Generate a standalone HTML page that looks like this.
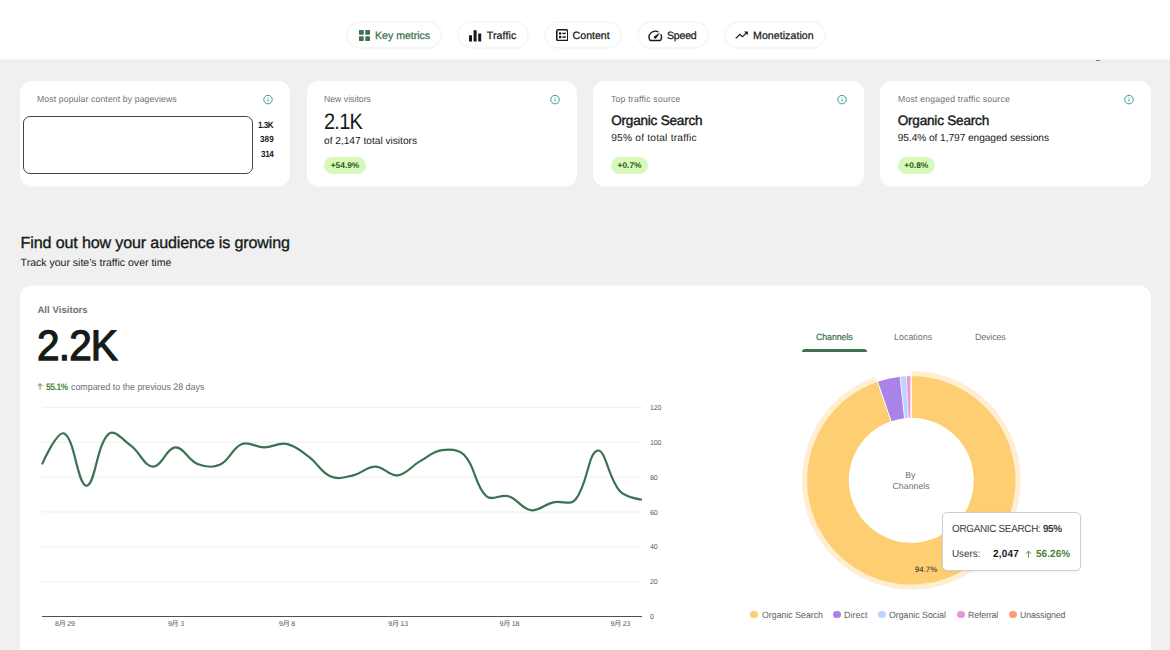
<!DOCTYPE html>
<html lang="en">
<head>
<meta charset="utf-8">
<title>Site Kit dashboard</title>
<style>
*{box-sizing:border-box;margin:0;padding:0}
html,body{width:1170px;height:650px;overflow:hidden}
body{background:#f0f0f1;font-family:"Liberation Sans","Noto Sans CJK SC",sans-serif;color:#161b18;position:relative;-webkit-font-smoothing:antialiased;text-rendering:geometricPrecision}
.abs{position:absolute}
.t{position:absolute;white-space:nowrap;line-height:1}
#hdr{left:0;top:0;width:1170px;height:59px;background:#fff;box-shadow:0 1px 0 #f6f6f7,0 4px 0 #eeeeef}
.chip{position:absolute;top:21px;height:28px;border:2px solid #f6f7f7;border-radius:14px;background:#fff}
.chip .t{font-size:10.6px;top:7.2px;font-weight:400;color:#161b18;-webkit-text-stroke:0.25px currentColor}
.card{position:absolute;background:#fff;border-radius:12px}
.kt{font-size:8.85px;color:#6c726e;top:13.5px;left:17px}
.badge{position:absolute;height:17px;border-radius:9px;background:#d8f9bc;color:#265912;font-size:8.4px;font-weight:700;text-align:center;line-height:17px}
.num{font-size:9px;font-weight:700;color:#161b18;transform:scaleX(0.9);transform-origin:0 0}
.sub{font-size:10.2px;color:#161b18}
.med{font-size:14px;color:#161b18;-webkit-text-stroke:0.4px currentColor}
.tab{font-size:9.1px;color:#6c726e}
.lg{font-size:9.15px;color:#5b615d}
.info{position:absolute;top:13px;width:12px;height:12px}
.ax{font-family:"Liberation Sans","Noto Sans CJK SC",sans-serif;font-size:7.1px;fill:#5a5a5a;letter-spacing:-0.25px}
</style>
</head>
<body>

<!-- header / nav chips -->
<div id="hdr" class="abs"></div>
<div class="chip" style="left:345.5px;width:96.5px">
  <svg class="abs" style="left:11.5px;top:7.2px" width="11" height="11" viewBox="0 0 11 11"><g fill="#3c7251"><rect x="0" y="0" width="4.7" height="4.7" rx="0.6"/><rect x="6.3" y="0" width="4.7" height="4.7" rx="0.6"/><rect x="0" y="6.3" width="4.7" height="4.7" rx="0.6"/><rect x="6.3" y="6.3" width="4.7" height="4.7" rx="0.6"/></g></svg>
  <span class="t" id="n1" style="left:27.6px;color:#3c7251;top:8.00px;letter-spacing:-0.041px">Key metrics</span>
</div>
<div class="chip" style="left:457.0px;width:72.0px">
  <svg class="abs" style="left:10.1px;top:6.7px" width="13" height="12" viewBox="0 0 13 12"><g fill="#161b18"><rect x="0" y="5.3" width="3" height="6.2"/><rect x="4.6" y="0.2" width="3" height="11.3"/><rect x="9.2" y="3.5" width="3" height="8"/></g></svg>
  <span class="t" id="n2" style="left:27.7px;top:8.00px;letter-spacing:0.122px">Traffic</span>
</div>
<div class="chip" style="left:543.5px;width:78.0px">
  <svg class="abs" style="left:10.1px;top:6.1px" width="12.6" height="12.4" viewBox="0 0 12.6 12.4"><rect x="0.8" y="0.8" width="11" height="10.8" rx="1.7" fill="none" stroke="#161b18" stroke-width="1.6"/><g fill="#161b18"><rect x="3" y="3.3" width="2.3" height="2.3"/><rect x="3" y="6.9" width="2.3" height="2.3"/><rect x="6.4" y="3.7" width="3.4" height="1.5"/><rect x="6.4" y="7.3" width="3.4" height="1.5"/></g></svg>
  <span class="t" id="n3" style="left:27.1px;top:8.00px;letter-spacing:-0.002px">Content</span>
</div>
<div class="chip" style="left:637.0px;width:72.0px">
  <svg class="abs" style="left:8.3px;top:4.5px" width="16.56" height="15.84" viewBox="0 0 24 24" preserveAspectRatio="none"><path fill="#161b18" d="M20.38 8.57l-1.23 1.85a8 8 0 0 1-.22 7.58H5.07A8 8 0 0 1 15.58 6.85l1.85-1.23A10 10 0 0 0 3.35 19a2 2 0 0 0 1.72 1h13.85a2 2 0 0 0 1.74-1 10 10 0 0 0-.27-10.44zm-9.79 6.84a2 2 0 0 0 2.83 0l5.66-8.49-8.49 5.66a2 2 0 0 0 0 2.83z"/></svg>
  <span class="t" id="n4" style="left:28px;top:8.00px;letter-spacing:-0.228px">Speed</span>
</div>
<div class="chip" style="left:724.0px;width:102.0px">
  <svg class="abs" style="left:8.4px;top:5.3px" width="15.12" height="14.40" viewBox="0 0 24 24" preserveAspectRatio="none"><path fill="#161b18" d="M16 6l2.29 2.29-4.88 4.88-4-4L2 16.59 3.41 18l6-6 4 4 6.3-6.29L22 12V6z"/></svg>
  <span class="t" id="n5" style="left:27px;top:8.00px;letter-spacing:0.052px">Monetization</span>
</div>
<div class="abs" style="left:1096px;top:60px;width:4px;height:1px;background:#4f8c93"></div>

<!-- KPI cards -->
<div class="card" id="c1" style="left:20px;top:81px;width:270px;height:105px;box-shadow:0 1px 0 rgba(255,255,255,.55)">
  <span class="t kt" id="k1" style="top:14.00px;transform:scaleX(0.975);transform-origin:0 0;letter-spacing:0.141px">Most popular content by pageviews</span>
  <svg class="info" style="left:243.4px" viewBox="0 0 12 12"><circle cx="5" cy="5.6" r="4.25" fill="none" stroke="#2f9c96" stroke-width="1"/><rect x="4.55" y="5.1" width="0.9" height="2.7" fill="#2f9c96"/><rect x="4.55" y="3.4" width="0.9" height="1" fill="#2f9c96"/></svg>
  <div class="abs" style="left:3px;top:35px;width:230px;height:58px;border:1px solid #444;border-radius:7px"></div>
  <span class="t num" id="v1" style="left:238.1px;top:40.00px;letter-spacing:-0.533px">1.3K</span>
  <span class="t num" id="v2" style="left:239.6px;top:54.00px;letter-spacing:0.065px">389</span>
  <span class="t num" id="v3" style="left:240.8px;top:69.00px;letter-spacing:-0.379px">314</span>
</div>
<div class="card" id="c2" style="left:307px;top:81px;width:270px;height:105px;box-shadow:0 1px 0 rgba(255,255,255,.55)">
  <span class="t kt" id="k2" style="top:14.00px;transform:scaleX(0.975);transform-origin:0 0;letter-spacing:0.036px">New visitors</span>
  <svg class="info" style="left:243px" viewBox="0 0 12 12"><circle cx="5" cy="5.6" r="4.25" fill="none" stroke="#2f9c96" stroke-width="1"/><rect x="4.55" y="5.1" width="0.9" height="2.7" fill="#2f9c96"/><rect x="4.55" y="3.4" width="0.9" height="1" fill="#2f9c96"/></svg>
  <span class="t" id="b2" style="left:17px;top:30.00px;font-size:22.2px;transform:scaleX(0.9);transform-origin:0 0;letter-spacing:-0.828px">2.1K</span>
  <span class="t sub" id="s2" style="left:17px;top:56.00px;letter-spacing:-0.019px">of 2,147 total visitors</span>
  <div class="badge" style="left:17px;top:76px;width:42px">+54.9%</div>
</div>
<div class="card" id="c3" style="left:593px;top:81px;width:271px;height:105px;box-shadow:0 1px 0 rgba(255,255,255,.55)">
  <span class="t kt" id="k3" style="left:18.2px;top:14.00px;transform:scaleX(0.975);transform-origin:0 0;letter-spacing:0.234px">Top traffic source</span>
  <svg class="info" style="left:243.7px" viewBox="0 0 12 12"><circle cx="5" cy="5.6" r="4.25" fill="none" stroke="#2f9c96" stroke-width="1"/><rect x="4.55" y="5.1" width="0.9" height="2.7" fill="#2f9c96"/><rect x="4.55" y="3.4" width="0.9" height="1" fill="#2f9c96"/></svg>
  <span class="t med" id="b3" style="left:18.2px;top:33.00px;font-size:13.6px;letter-spacing:-0.232px">Organic Search</span>
  <span class="t sub" id="s3" style="left:18.2px;top:53.00px;letter-spacing:0.217px">95% of total traffic</span>
  <div class="badge" style="left:18px;top:76px;width:37px">+0.7%</div>
</div>
<div class="card" id="c4" style="left:880px;top:81px;width:271px;height:105px;box-shadow:0 1px 0 rgba(255,255,255,.55)">
  <span class="t kt" id="k4" style="left:17.7px;top:14.00px;transform:scaleX(0.975);transform-origin:0 0;letter-spacing:0.218px">Most engaged traffic source</span>
  <svg class="info" style="left:243.5px" viewBox="0 0 12 12"><circle cx="5" cy="5.6" r="4.25" fill="none" stroke="#2f9c96" stroke-width="1"/><rect x="4.55" y="5.1" width="0.9" height="2.7" fill="#2f9c96"/><rect x="4.55" y="3.4" width="0.9" height="1" fill="#2f9c96"/></svg>
  <span class="t med" id="b4" style="left:17.7px;top:33.00px;font-size:13.6px;letter-spacing:-0.225px">Organic Search</span>
  <span class="t sub" id="s4" style="left:17.7px;top:53.00px;letter-spacing:-0.071px">95.4% of 1,797 engaged sessions</span>
  <div class="badge" style="left:17.5px;top:76px;width:37.5px">+0.8%</div>
</div>

<!-- section heading -->
<span class="t" id="h1" style="left:20.6px;top:235.00px;font-size:16.1px;color:#161b18;-webkit-text-stroke:0.35px currentColor;letter-spacing:-0.147px">Find out how your audience is growing</span>
<span class="t" id="h2" style="left:20.6px;top:258.00px;font-size:10.5px;color:#161b18;letter-spacing:0.010px">Track your site’s traffic over time</span>

<!-- big card -->
<div class="card" id="bigbg" style="left:20px;top:286px;width:1131px;height:380px;box-shadow:0 -1px 0 rgba(255,255,255,.5)"></div>
<div class="abs" id="big" style="left:20px;top:285px;width:1131px;height:365px">
  <span class="t" id="av" style="left:17.4px;top:21.00px;font-size:9.6px;font-weight:700;color:#6c726e;letter-spacing:0.029px">All Visitors</span>
  <span class="t" id="bigv" style="left:17.1px;top:40.00px;font-size:42.6px;color:#161b18;-webkit-text-stroke:1.25px currentColor;transform:scaleX(0.95);transform-origin:0 0;letter-spacing:-0.85px">2.2K</span>
  <svg class="abs" style="left:17px;top:98px" width="7" height="8" viewBox="0 0 7 8"><path d="M3.05 6.5V0.7M0.6 3.1L3.05 0.65L5.5 3.1" fill="none" stroke="#4a8535" stroke-width="0.9"/></svg>
  <span class="t" id="cmpa" style="left:25.5px;top:98.00px;font-size:9.3px;font-weight:700;color:#4a8535;transform:scaleX(0.9);transform-origin:0 0;letter-spacing:-0.406px">55.1%</span>
  <span class="t" id="cmp" style="left:51.2px;top:98.00px;font-size:9.5px;color:#6c726e;transform:scaleX(0.93);transform-origin:0 0;letter-spacing:0.007px">compared to the previous 28 days</span>
  <!--LC0--><svg class="abs" id="lc" style="left:0;top:0" width="700" height="365" viewBox="0 0 700 365">
  <rect x="22.0" y="296.22" width="600.0" height="1" fill="#efefef"/>
  <rect x="22.0" y="261.33" width="600.0" height="1" fill="#efefef"/>
  <rect x="22.0" y="226.45" width="600.0" height="1" fill="#efefef"/>
  <rect x="22.0" y="191.57" width="600.0" height="1" fill="#efefef"/>
  <rect x="22.0" y="156.68" width="600.0" height="1" fill="#efefef"/>
  <rect x="22.0" y="121.80" width="600.0" height="1" fill="#efefef"/>
  <rect x="22.0" y="331.00" width="600.0" height="1" fill="#505050"/>
  <path d="M22.00 179.33 C22.00 179.33 37.10 145.02 44.22 148.46 C54.87 153.60 57.53 200.72 66.44 200.79 C75.31 200.86 76.37 159.91 88.67 148.81 C94.15 143.87 102.85 154.74 110.89 160.67 C120.63 167.86 124.05 181.25 133.11 181.60 C141.83 181.94 146.19 162.95 155.33 162.42 C163.97 161.91 167.69 175.11 177.56 178.99 C185.47 182.09 192.28 183.24 199.78 179.86 C210.06 175.22 211.76 162.94 222.00 158.93 C229.54 155.97 235.33 162.42 244.22 162.42 C253.11 162.42 258.13 157.20 266.44 158.93 C275.91 160.90 280.45 165.63 288.67 171.66 C298.23 178.68 300.71 187.27 310.89 191.54 C318.49 194.73 324.53 192.24 333.11 190.32 C342.31 188.26 346.44 181.60 355.33 181.60 C364.22 181.60 369.09 191.32 377.56 190.32 C386.86 189.23 390.65 181.53 399.78 176.37 C408.43 171.48 412.72 166.52 422.00 165.21 C430.49 164.01 438.40 164.06 444.22 170.09 C456.18 182.48 454.39 200.09 466.44 211.25 C472.17 216.56 480.51 208.69 488.67 211.25 C498.29 214.27 501.52 223.92 510.89 225.21 C519.30 226.36 523.99 219.50 533.11 217.36 C541.77 215.32 550.12 220.81 555.33 214.74 C567.90 200.09 567.97 167.44 577.56 165.56 C585.75 163.95 588.06 193.05 599.78 206.02 C605.84 212.73 622.00 214.74 622.00 214.74" fill="none" stroke="#3c7251" stroke-width="2.2" stroke-linejoin="round" stroke-linecap="butt"/>
  <text class="ax" x="630.0" y="334.15">0</text>
  <text class="ax" x="630.0" y="299.27">20</text>
  <text class="ax" x="630.0" y="264.38">40</text>
  <text class="ax" x="630.0" y="229.50">60</text>
  <text class="ax" x="630.0" y="194.62">80</text>
  <text class="ax" x="630.0" y="159.73">100</text>
  <text class="ax" x="630.0" y="124.85">120</text>
  <text class="ax" text-anchor="middle" x="44.8" y="341.30">8月 29</text>
  <text class="ax" text-anchor="middle" x="155.9" y="341.30">9月 3</text>
  <text class="ax" text-anchor="middle" x="267.0" y="341.30">9月 8</text>
  <text class="ax" text-anchor="middle" x="378.2" y="341.30">9月 13</text>
  <text class="ax" text-anchor="middle" x="489.3" y="341.30">9月 18</text>
  <text class="ax" text-anchor="middle" x="600.4" y="341.30">9月 23</text>
  </svg><!--LC1-->
  <span class="t tab" id="t1" style="left:795.5px;top:48.00px;color:#3c7251;-webkit-text-stroke:0.2px currentColor;transform:scaleX(0.975);transform-origin:0 0;letter-spacing:-0.112px">Channels</span>
  <span class="t tab" id="t2" style="left:874.4px;top:48.00px;transform:scaleX(0.975);transform-origin:0 0;letter-spacing:0.028px">Locations</span>
  <span class="t tab" id="t3" style="left:955.0px;top:48.00px;transform:scaleX(0.975);transform-origin:0 0;letter-spacing:-0.139px">Devices</span>
  <div class="abs" style="left:781.5px;top:63.8px;width:65px;height:2.8px;background:#3c7251;border-radius:3px 3px 0 0"></div>
  <!--DN0--><svg class="abs" id="dn" style="left:0;top:0" width="1131" height="365" viewBox="0 0 1131 365">
  <path d="M891.78 85.90 A109.40 109.40 0 1 1 855.41 91.95 L857.22 97.15 A103.90 103.90 0 1 0 891.75 91.40 Z" fill="#fece72" fill-opacity="0.32"/>
  <path d="M891.30 91.10 A104.20 104.20 0 1 1 857.55 96.72 L871.06 136.17 A62.50 62.50 0 1 0 891.30 132.80 Z" fill="#fece72"/>
  <path d="M857.55 96.72 A104.20 104.20 0 0 1 879.96 91.72 L884.50 133.17 A62.50 62.50 0 0 0 871.06 136.17 Z" fill="#a983e6"/>
  <path d="M879.96 91.72 A104.20 104.20 0 0 1 886.39 91.22 L888.36 132.87 A62.50 62.50 0 0 0 884.50 133.17 Z" fill="#bed4ff"/>
  <path d="M886.39 91.22 A104.20 104.20 0 0 1 890.21 91.11 L890.65 132.80 A62.50 62.50 0 0 0 888.36 132.87 Z" fill="#ee92da"/>
  <path d="M890.21 91.11 A104.20 104.20 0 0 1 891.30 91.10 L891.30 132.80 A62.50 62.50 0 0 0 890.65 132.80 Z" fill="#ff9b7a"/>
  <path d="M891.30 133.30L891.30 90.60" stroke="#fff" stroke-width="1.0"/>
  <path d="M871.22 136.64L857.39 96.24" stroke="#fff" stroke-width="1.0"/>
  <path d="M884.55 133.67L879.90 91.22" stroke="#fff" stroke-width="0.7"/>
  <path d="M888.38 133.37L886.37 90.72" stroke="#fff" stroke-width="0.6"/>
  <path d="M890.65 133.30L890.20 90.61" stroke="#fff" stroke-width="0.5"/>
  <text x="890.4" y="192.9" text-anchor="middle" style="font-size:8.8px;fill:#6c726e">By</text>
  <text x="891.1" y="204.4" text-anchor="middle" style="font-size:8.8px;fill:#6c726e">Channels</text>
  <text id="pct" x="906.1" y="287.2" text-anchor="middle" style="font-size:7.8px;fill:#222">94.7%</text>
  </svg><!--DN1-->
  <div class="abs" style="left:730.3px;top:325.7px;width:7.8px;height:7.8px;border-radius:50%;background:#fece72"></div>
  <span class="t lg" id="l1" style="left:741.8px;top:326.00px;transform:scaleX(0.96);transform-origin:0 0;letter-spacing:0.010px">Organic Search</span>
  <div class="abs" style="left:813.0px;top:325.7px;width:7.8px;height:7.8px;border-radius:50%;background:#a983e6"></div>
  <span class="t lg" id="l2" style="left:824.3px;top:326.00px;transform:scaleX(0.96);transform-origin:0 0;letter-spacing:0.123px">Direct</span>
  <div class="abs" style="left:857.8px;top:325.7px;width:7.8px;height:7.8px;border-radius:50%;background:#bed4ff"></div>
  <span class="t lg" id="l3" style="left:869.1px;top:326.00px;transform:scaleX(0.96);transform-origin:0 0;letter-spacing:-0.006px">Organic Social</span>
  <div class="abs" style="left:937.1px;top:325.7px;width:7.8px;height:7.8px;border-radius:50%;background:#ee92da"></div>
  <span class="t lg" id="l4" style="left:948.4px;top:326.00px;transform:scaleX(0.96);transform-origin:0 0;letter-spacing:-0.125px">Referral</span>
  <div class="abs" style="left:988.8px;top:325.7px;width:7.8px;height:7.8px;border-radius:50%;background:#ff9b7a"></div>
  <span class="t lg" id="l5" style="left:1000.1px;top:326.00px;transform:scaleX(0.96);transform-origin:0 0;letter-spacing:-0.091px">Unassigned</span>
  <div class="abs" id="tip" style="left:922.4px;top:226.5px;width:138.4px;height:59.8px;background:#fff;border:1px solid #cbd0d3;border-radius:5px;box-shadow:0 1px 3px rgba(0,0,0,0.06)">
    <span class="t" id="tp1" style="left:8.4px;top:12.50px;font-size:10.3px;color:#3c3c3c;transform:scaleX(0.96);transform-origin:0 0;letter-spacing:-0.305px">ORGANIC SEARCH: <b style="font-weight:700">95%</b></span>
    <span class="t" id="tp2" style="left:8.4px;top:37.50px;font-size:10.3px;color:#3c3c3c;transform:scaleX(0.96);transform-origin:0 0;letter-spacing:-0.063px">Users:</span>
    <span class="t" id="tp3" style="left:49.6px;top:37.50px;font-size:10.3px;color:#161b18;font-weight:700;transform:scaleX(0.96);transform-origin:0 0;letter-spacing:0.262px">2,047</span>
    <svg class="abs" style="left:81.2px;top:37.5px" width="7" height="8" viewBox="0 0 7 8"><path d="M3.5 7.6V1.2M0.8 3.8L3.5 1.1L6.2 3.8" fill="none" stroke="#4a8535" stroke-width="0.9"/></svg>
    <span class="t" id="tp4" style="left:93.0px;top:37.50px;font-size:10.3px;color:#4a8535;font-weight:700;transform:scaleX(0.96);transform-origin:0 0;letter-spacing:0.116px">56.26%</span>
  </div>
</div>

</body>
</html>
